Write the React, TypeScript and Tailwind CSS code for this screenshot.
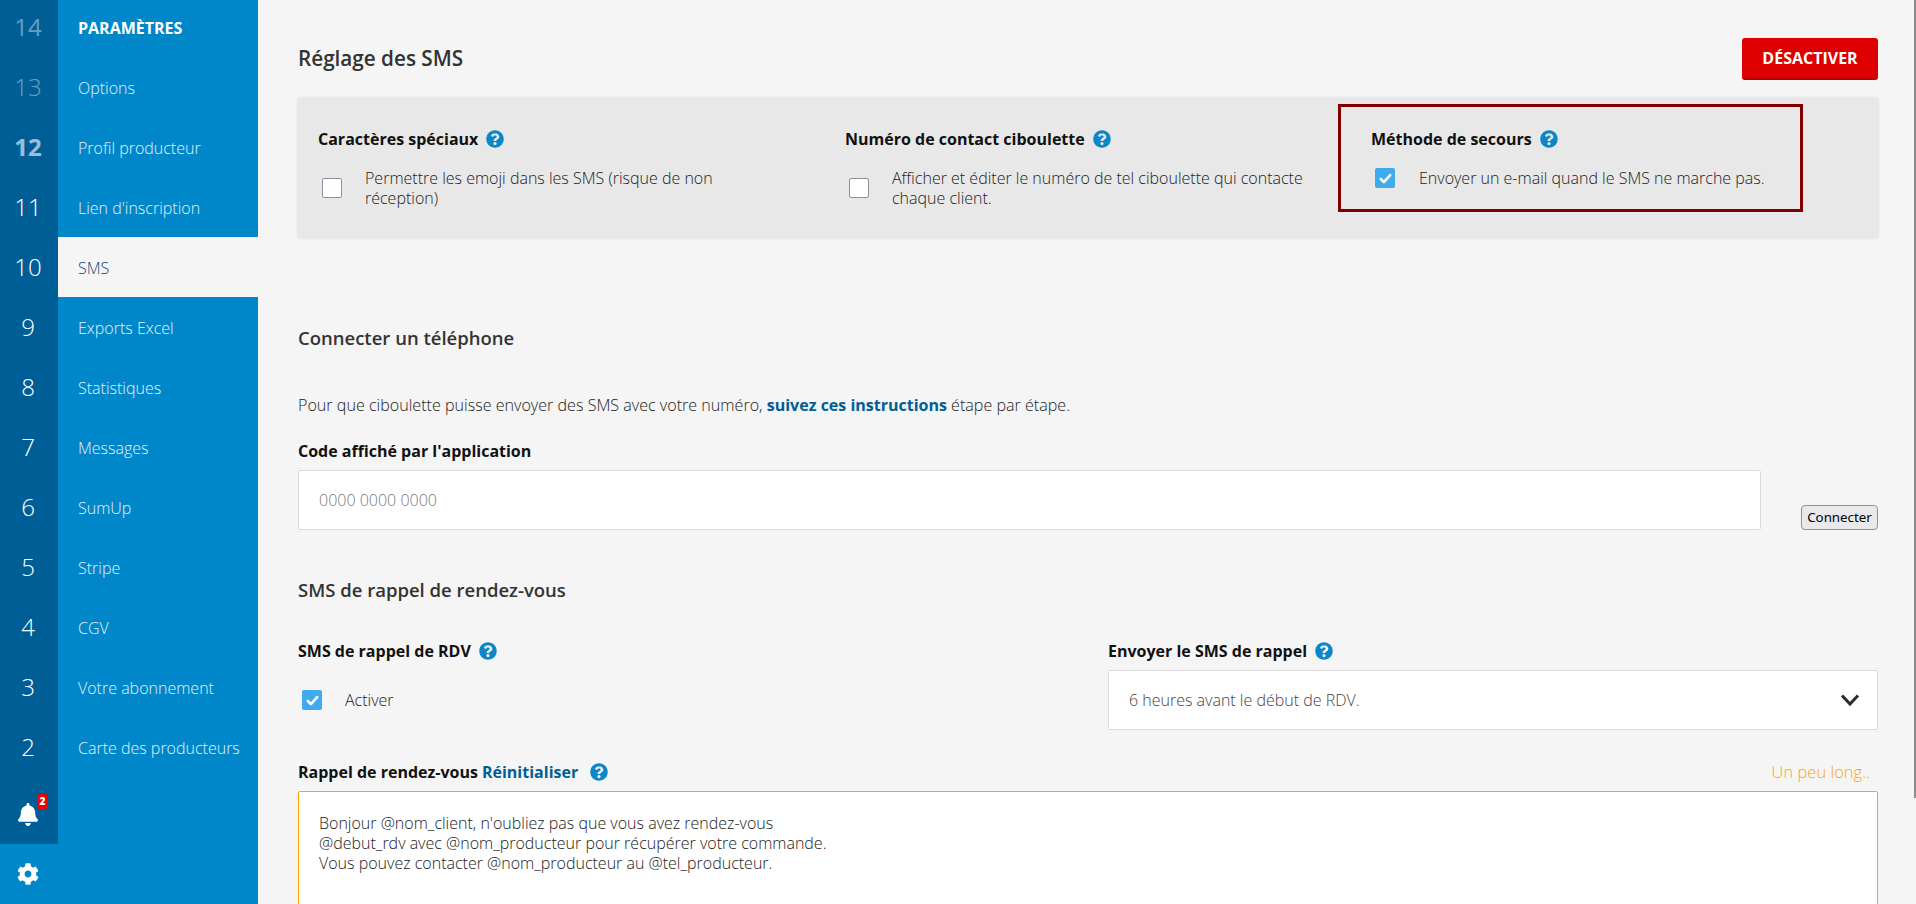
import React from "react";

function Help({ className = "" }: { className?: string }) {
  return (
    <svg viewBox="0 0 512 512" className={`inline-block w-[18px] h-[18px] shrink-0 ${className}`} fill="#0a86c9">
      <path d="M504 256c0 137-111 248-248 248S8 393 8 256 119 8 256 8s248 111 248 248zM262.700 90c-54.500 0-89.300 23-116.600 63.800-3.500 5.300-2.400 12.400 2.700 16.300l34.700 26.300c5.200 3.900 12.600 3 16.700-2.100 17.900-22.700 30.100-35.800 57.300-35.800 20.400 0 45.700 13.100 45.700 33 0 15-12.400 22.700-32.600 34-23.600 13.200-54.800 29.700-54.800 70.900V300c0 6.600 5.400 12 12 12h56c6.600 0 12-5.400 12-12v-1.300c0-28.600 83.500-29.800 83.500-107.200 0-58.300-60.500-102.500-117.100-102.500zM256 339c-25.500 0-46.200 20.700-46.200 46.200 0 25.500 20.700 46.200 46.200 46.200s46.200-20.700 46.200-46.200c0-25.500-20.700-46.200-46.200-46.200z" />
    </svg>
  );
}

function Check({ checked }: { checked?: boolean }) {
  return checked ? (
    <span className="w-5 h-5 rounded-[2px] bg-[#3fabec] flex items-center justify-center shrink-0">
      <svg viewBox="0 0 16 16" className="w-[15px] h-[15px]" fill="none" stroke="#fff" strokeWidth="2.8" strokeLinecap="round" strokeLinejoin="round">
        <path d="M3 8.500l3.300 3.300L13 4.500" />
      </svg>
    </span>
  ) : (
    <span className="w-5 h-5 rounded-[2px] bg-white border border-[#8f8f9d] shrink-0" />
  );
}

const rows: [string, string, string][] = [
  ["14", "PARAMÈTRES", "font-normal opacity-40"],
  ["13", "Options", "font-light opacity-40"],
  ["12", "Profil producteur", "font-bold opacity-60"],
  ["11", "Lien d'inscription", "font-light"],
  ["10", "SMS", "font-light"],
  ["9", "Exports Excel", "font-light"],
  ["8", "Statistiques", "font-light"],
  ["7", "Messages", "font-light"],
  ["6", "SumUp", "font-light"],
  ["5", "Stripe", "font-light"],
  ["4", "CGV", "font-light"],
  ["3", "Votre abonnement", "font-light"],
  ["2", "Carte des producteurs", "font-light"],
];

const label = "flex items-center gap-2 text-[16px] font-bold text-[#111]";

export default function App() {
  return (
    <div className="flex h-[904px] w-[1916px] overflow-hidden bg-[#f5f5f5] font-['Open_Sans',sans-serif] text-[#111]">
      <div className="w-[58px] shrink-0 bg-[#0087c9] flex flex-col">
        <div className="h-[844px] bg-[#005e96] overflow-hidden pr-[2px]">
          <div className="-mt-[3px]">
            {rows.map(([n, , c]) => (
              <div key={n} className={`h-[60px] flex items-center justify-center text-[24px] text-white ${c}`}>{n}</div>
            ))}
            <div className="h-[67px] flex items-end justify-center pb-[18px]">
              <span className="relative">
                <svg viewBox="0 0 448 512" className="w-5 h-[23px] block" fill="#fff">
                  <path d="M224 512c35.300 0 64-28.700 64-64H160c0 35.300 28.700 64 64 64zm215.400-149.700c-19.300-20.800-55.500-52-55.500-154.300 0-77.700-54.500-139.900-128-155.200V32c0-17.700-14.300-32-32-32s-32 14.300-32 32v20.800C118.500 68.100 64 130.300 64 208c0 102.300-36.200 133.500-55.500 154.300-6 6.400-8.600 14.100-8.500 21.700.1 16.400 13 32 32.100 32h383.800c19.100 0 32-15.600 32.100-32 .1-7.600-2.500-15.300-8.500-21.700z" />
                </svg>
                <span className="absolute -top-[9px] -right-[10px] w-[11px] h-[15px] rounded-[3px] bg-[#f00000] text-white text-[10px] leading-[15px] font-extrabold text-center">2</span>
              </span>
            </div>
          </div>
        </div>
        <div className="h-[60px] flex items-center justify-center pr-[2px]">
          <svg viewBox="0 0 512 512" className="w-[22px] h-[22px]" fill="#fff">
            <path d="M487.400 315.700l-42.600-24.600c4.300-23.200 4.300-47 0-70.200l42.600-24.600c4.900-2.800 7.100-8.600 5.500-14-11.100-35.600-30-67.800-54.700-94.600-3.800-4.100-10-5.100-14.800-2.300L380.800 110c-17.900-15.400-38.500-27.300-60.800-35.100V25.800c0-5.600-3.900-10.500-9.400-11.700-36.700-8.200-74.300-7.800-109.200 0-5.500 1.200-9.400 6.100-9.400 11.700V75c-22.200 7.900-42.800 19.800-60.800 35.100L88.700 85.500c-4.900-2.800-11-1.900-14.800 2.300-24.700 26.700-43.600 58.900-54.700 94.600-1.700 5.400.6 11.200 5.500 14L67.300 221c-4.300 23.200-4.300 47 0 70.200l-42.600 24.600c-4.900 2.800-7.100 8.600-5.500 14 11.100 35.600 30 67.800 54.700 94.600 3.800 4.100 10 5.100 14.800 2.300l42.600-24.600c17.900 15.400 38.500 27.300 60.800 35.100v49.200c0 5.600 3.900 10.500 9.400 11.700 36.700 8.200 74.300 7.800 109.200 0 5.500-1.200 9.400-6.100 9.400-11.700v-49.200c22.200-7.900 42.800-19.800 60.800-35.100l42.600 24.600c4.900 2.800 11 1.900 14.800-2.300 24.700-26.700 43.600-58.900 54.700-94.600 1.500-5.500-.7-11.300-5.600-14.100zM256 336c-44.100 0-80-35.900-80-80s35.900-80 80-80 80 35.900 80 80-35.900 80-80 80z" />
          </svg>
        </div>
      </div>

      <div className="w-[200px] shrink-0 bg-[#0087c9] overflow-hidden">
        <div className="-mt-[3px]">
          {rows.map(([n, name], i) => (
            <div
              key={n}
              className={`h-[60px] flex items-center pl-5 pt-[1px] text-[16px] ${
                i === 0 ? "font-bold text-white" : name === "SMS" ? "bg-[#f5f5f5] text-[#0d4a70] font-light" : "font-light text-[#e3f1f9]"
              }`}
            >
              {name}
            </div>
          ))}
        </div>
      </div>

      <main className="flex-1 min-w-0 pl-10 pr-[38px] relative">
        <div className="absolute top-0 right-0 h-[798px] w-[2px] bg-[#8c8c8c]" />
        <div className="flex items-center justify-between pt-[38px] h-[80px]">
          <h1 className="text-[20.7px] font-semibold text-[#333]">Réglage des SMS</h1>
          <button className="w-[136px] h-[42px] rounded-[3px] bg-[#de0000] border-b-2 border-[#b80000] text-white text-[16px] font-bold">DÉSACTIVER</button>
        </div>

        <section className="mt-[18px] h-[140px] rounded-[3px] bg-[#e8e8e8] shadow-[0_0_3px_rgba(0,0,0,0.14)] flex pl-5">
          <div className="w-[527px] pt-[30px]">
            <div className={`${label} h-[22px]`}>Caractères spéciaux <Help /></div>
            <div className="flex items-center mt-[18px] pl-1">
              <Check />
              <p className="ml-[23px] w-[370px] text-[16px] leading-5 font-light text-[#222]">Permettre les emoji dans les SMS (risque de non réception)</p>
            </div>
          </div>
          <div className="w-[493px] pt-[30px]">
            <div className={`${label} h-[22px]`}>Numéro de contact ciboulette <Help /></div>
            <div className="flex items-center mt-[18px] pl-1">
              <Check />
              <p className="ml-[23px] w-[430px] text-[16px] leading-5 font-light text-[#222]">Afficher et éditer le numéro de tel ciboulette qui contacte chaque client.</p>
            </div>
          </div>
          <div className="w-[465px] h-[108px] mt-[6px] border-[3px] border-[#800000] pl-[30px] pt-[21px]">
            <div className={`${label} h-[22px]`}>Méthode de secours <Help /></div>
            <div className="flex items-center mt-[18px] pl-1">
              <Check checked />
              <p className="ml-6 text-[16px] leading-5 font-light text-[#222]">Envoyer un e-mail quand le SMS ne marche pas.</p>
            </div>
          </div>
        </section>

        <h2 className="mt-[88px] text-[18.5px] leading-6 font-semibold text-[#333]">Connecter un téléphone</h2>
        <p className="mt-[43px] text-[16.1px] leading-6 font-light text-[#222]">
          Pour que ciboulette puisse envoyer des SMS avec votre numéro, <a className="text-[16px] font-bold text-[#005e96]">suivez ces instructions</a> étape par étape.
        </p>
        <div className="mt-[22px] text-[16px] leading-6 font-bold text-[#111]">Code affiché par l'application</div>
        <div className="flex items-end mt-[7px]">
          <div className="w-[1463px] h-[60px] bg-white rounded-[2px] border border-[#dcdcdc] flex items-center pl-5 text-[16px] font-light text-[#777]">0000 0000 0000</div>
          <button className="ml-10 w-[77px] h-[25px] rounded-[4px] border border-[#8f8f9d] bg-[#e9e9ed] text-[13.33px] font-['Noto_Sans',sans-serif] text-black whitespace-nowrap">Connecter</button>
        </div>

        <h2 className="mt-[48px] text-[18.5px] leading-6 font-semibold text-[#333]">SMS de rappel de rendez-vous</h2>

        <div className="flex mt-[37px]">
          <div className="w-[810px]">
            <div className={`${label} h-[24px]`}>SMS de rappel de RDV <Help /></div>
            <div className="flex items-center mt-[25px] pl-1">
              <Check checked />
              <span className="ml-[23px] text-[16px] font-light text-[#222]">Activer</span>
            </div>
          </div>
          <div className="flex-1">
            <div className={`${label} h-[24px]`}>Envoyer le SMS de rappel <Help /></div>
            <div className="mt-[7px] h-[60px] bg-white rounded-[2px] border border-[#dcdcdc] flex items-center justify-between pl-5 pr-[17px] text-[16px] font-light text-[#444]">
              6 heures avant le début de RDV.
              <svg viewBox="0 0 20 12" className="w-5 h-3" fill="none" stroke="#2b2b2b" strokeWidth="3"><path d="M2 1.500l8 8.500 8-8.500" /></svg>
            </div>
          </div>
        </div>

        <div className="flex items-center justify-between mt-[30px] h-[24px]">
          <div className="flex items-center text-[16px] font-bold text-[#111]">
            Rappel de rendez-vous <a className="ml-[4px] font-bold text-[#005e96]">Réinitialiser</a> <Help className="ml-3" />
          </div>
          <span className="text-[16.5px] font-light text-[#ffa500] pr-2">Un peu long..</span>
        </div>
        <div className="mt-[7px] h-[200px] bg-white rounded-[2px] border border-[#ffa500] px-5 py-[21px] text-[16px] leading-5 font-light text-[#222]">
          Bonjour @nom_client, n'oubliez pas que vous avez rendez-vous<br />
          @debut_rdv avec @nom_producteur pour récupérer votre commande.<br />
          Vous pouvez contacter @nom_producteur au @tel_producteur.
        </div>
      </main>
    </div>
  );
}
